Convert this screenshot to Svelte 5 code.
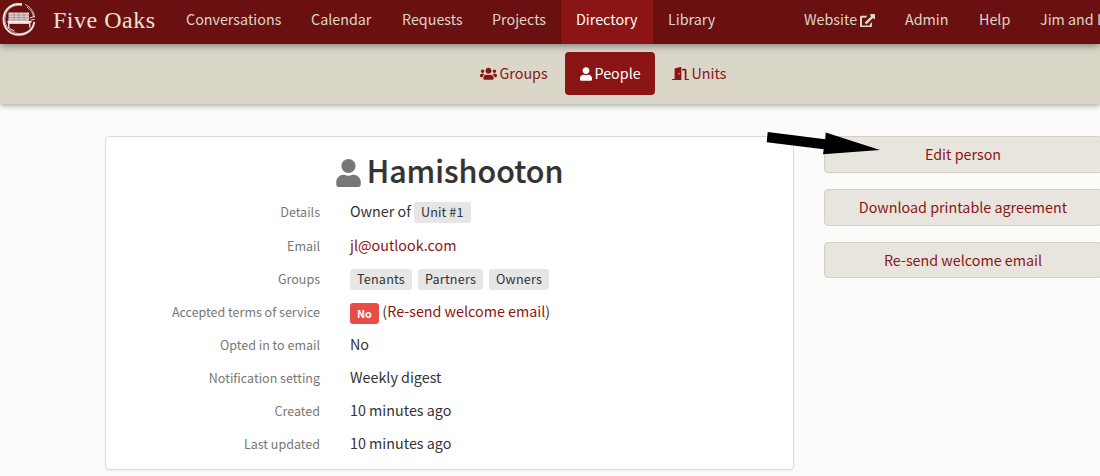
<script>
  const icons = {
    users: { box: '0 0 640 512', d: 'M96 224c35.3 0 64-28.7 64-64s-28.7-64-64-64-64 28.7-64 64 28.7 64 64 64zm448 0c35.3 0 64-28.7 64-64s-28.7-64-64-64-64 28.7-64 64 28.7 64 64 64zm32 32h-64c-17.6 0-33.5 7.1-45.1 18.6 40.3 22.1 68.9 62 75.1 109.4h66c17.7 0 32-14.3 32-32v-32c0-35.3-28.7-64-64-64zm-256 0c61.9 0 112-50.1 112-112S381.9 32 320 32 208 82.1 208 144s50.1 112 112 112zm76.8 32h-8.3c-20.8 10-43.9 16-68.5 16s-47.6-6-68.5-16h-8.3C179.6 288 128 339.6 128 403.2V432c0 26.5 21.5 48 48 48h288c26.5 0 48-21.5 48-48v-28.8c0-63.6-51.6-115.2-115.2-115.2zm-223.7-13.4C161.5 263.1 145.6 256 128 256H64c-35.3 0-64 28.7-64 64v32c0 17.7 14.3 32 32 32h65.9c6.3-47.4 34.9-87.3 75.2-109.4z' },
    user: { box: '0 0 448 512', d: 'M224 256c70.7 0 128-57.3 128-128S294.7 0 224 0 96 57.3 96 128s57.3 128 128 128zm89.6 32h-16.7c-22.2 10.2-46.9 16-72.9 16s-50.6-5.8-72.9-16h-16.7C60.2 288 0 348.2 0 422.4V464c0 26.5 21.5 48 48 48h352c26.5 0 48-21.5 48-48v-41.6c0-74.2-60.2-134.4-134.4-134.4z' },
    door: { box: '0 0 640 512', d: 'M624 448h-80V113.45C544 86.19 522.47 64 496 64H384v64h96v384h144c8.84 0 16-7.16 16-16v-32c0-8.84-7.16-16-16-16zM312.24 1.01l-192 49.74C105.99 54.44 96 67.7 96 82.92V448H16c-8.84 0-16 7.16-16 16v32c0 8.84 7.16 16 16 16h336V33.18c0-21.58-19.56-37.41-39.76-32.17zM264 288c-13.25 0-24-14.33-24-32s10.75-32 24-32 24 14.33 24 32-10.75 32-24 32z' },
    external: { box: '0 0 576 512', d: 'M456 300v164q0 48-48 48H48q-48 0-48-48V112q0-48 48-48h240l-72 76H76v296h304V376zM576 24v144c0 21-26 32-41 17l-36-36-253 253-70-70 253-253-36-36c-15-15-4-43 17-43h142c13 0 24 11 24 24z' }
  };
  const mainNav = [
    ['Conversations', 125], ['Calendar', 91], ['Requests', 90], ['Projects', 84],
    ['Directory', 92], ['Library', 77]
  ];
  const sideNav = [['Website', 101], ['Admin', 74], ['Help', 61], ['Jim and L', 110]];
  const actions = ['Edit person', 'Download printable agreement', 'Re-send welcome email'];
</script>

{#snippet icon(name, cls)}
  <svg class="icon {cls}" viewBox={icons[name].box} aria-hidden="true"><path d={icons[name].d} /></svg>
{/snippet}

<div class="page">
  <header>
    <svg class="logo" viewBox="0 0 34 34" aria-hidden="true">
      <g fill="none" stroke="#eee7e2">
        <path d="M20 1.300C10-.5 2 6 1.500 15.500C1.200 25 8 32 17 31.800C25 31.500 31 27 32.300 19" stroke-width="1.900" />
        <path d="M20 2.500C10 .8 3.800 7 3 15C2.500 23 8 29.500 16 30.600C22 31 27 28.500 30 24" stroke-width=".7" />
        <path d="M23 1.500C29 4 32 9 32.600 14.500M25 4C29 7 31 10 31.500 14" stroke-width=".8" />
        <path d="M27.500 15l5-1.500M28.500 17.200l4-.8M7.500 25.500l5 2.500" stroke-width="1" />
      </g>
      <path d="M6.500 9.500H27v9h1.500v6H27v-3.500H7.500v4.500H6v-8h.5z" fill="#dccfcb" />
      <path d="M7 12h20M7 14.500h20M7 17h20M12 9.500v8M17 9.500v8M22 9.500v8" stroke="#96605d" stroke-width=".5" />
      <path d="M5.500 18.800h24" stroke="#f5efeb" stroke-width="1.800" />
    </svg>
    <a class="brand">Five Oaks</a>
    <nav class="main">
      {#each mainNav as [label, w]}
        <a class:active={label === 'Directory'} style="width:{w}px">{label}</a>
      {/each}
    </nav>
    <nav class="side">
      {#each sideNav as [label, w]}
        <a style="width:{w}px">{label}{#if label === 'Website'}{@render icon('external', 'ext')}{/if}</a>
      {/each}
    </nav>
  </header>

  <nav class="sub">
    <a>{@render icon('users', 'wide')}<span>Groups</span></a>
    <a class="current">{@render icon('user', 'slim')}<span>People</span></a>
    <a>{@render icon('door', 'wide')}<span>Units</span></a>
  </nav>

  <main>
    <section class="card">
      <h1>{@render icon('user', 'big')}<span>Hamishooton</span></h1>
      <dl>
        <dt>Details</dt><dd>Owner of <span class="tag unit">Unit #1</span></dd>
        <dt>Email</dt><dd><a>jl@outlook.com</a></dd>
        <dt>Groups</dt><dd class="tags"><span class="tag">Tenants</span><span class="tag">Partners</span><span class="tag">Owners</span></dd>
        <dt>Accepted terms of service</dt><dd><span class="tag no">No</span>(<a>Re-send welcome email</a>)</dd>
        <dt>Opted in to email</dt><dd>No</dd>
        <dt>Notification setting</dt><dd>Weekly digest</dd>
        <dt>Created</dt><dd>10 minutes ago</dd>
        <dt>Last updated</dt><dd>10 minutes ago</dd>
      </dl>
    </section>
    <aside>
      {#each actions as action}<a class="button">{action}</a>{/each}
    </aside>
  </main>
  <svg class="pointer" viewBox="0 0 116 26" aria-hidden="true">
    <path d="M1.700 2L59.300 9.300L59.700 2.500L114 20L57 24.300L57.700 19.300L.7 12.300z" />
  </svg>
</div>

<style>
  :global(body) { margin: 0; overflow: hidden; }
  .page {
    position: relative; width: 1100px; height: 476px; overflow: hidden;
    background: #fbfbf9; color: #333;
    font: 14.320px/24px "Noto Sans CJK SC", "Open Sans", sans-serif;
  }
  .icon { fill: currentColor; flex: none; }
  header {
    position: relative; z-index: 2; display: flex; height: 44px; background: #6b1010;
    color: #dad7c9; box-shadow: 0 1px 8px rgba(0, 0, 0, .5);
  }
  .logo { width: 34px; height: 34px; margin: 3px 0 0 2px; flex: none; }
  .brand {
    width: 118px; margin-left: 17px; line-height: 40px; color: #e8e3d9; flex: none;
    font-family: "Liberation Serif", serif; font-size: 24px; letter-spacing: .5px; white-space: nowrap;
  }
  header nav { display: flex; flex: none; }
  header nav a { box-sizing: border-box; flex: none; padding-left: 15px; line-height: 37px; white-space: nowrap; }
  .side { margin-left: 59px; }
  .active { background: #8b1515; color: #fff; }
  .ext { width: 15px; height: 13.500px; margin-left: 3px; vertical-align: -2px; }
  .sub {
    position: relative; z-index: 1; display: flex; box-sizing: border-box; height: 60px; padding: 8px 0 0 465px;
    gap: 2px; background: #dad7c9; box-shadow: 0 1px 6px rgba(0, 0, 0, .4);
  }
  .sub a { display: flex; align-items: center; box-sizing: border-box; height: 43px; padding: 0 15px; color: #8b1515; border-radius: 4px; }
  .sub span { padding-bottom: 2px; }
  .sub a:first-child { width: 98px; }
  .sub .current { width: 90px; background: #8b1515; color: #fff; }
  .sub .wide { width: 17px; height: 13.600px; margin-right: 2.500px; }
  .sub .slim { width: 12px; height: 14px; margin-right: 2.500px; }
  main { display: flex; align-items: flex-start; gap: 30px; padding: 32px 0 0 105px; }
  .card {
    box-sizing: border-box; width: 689px; height: 334px; flex: none; border: 1px solid #ddd; border-radius: 4px;
    background: #fff; box-shadow: 0 1px 2px rgba(0, 0, 0, .05);
  }
  h1 {
    display: flex; align-items: center; justify-content: center; gap: 6px; height: 36px; margin: 17px 0 5px;
    font-size: 30.400px; font-weight: 500; line-height: 36px; -webkit-text-stroke: .2px #333;
  }
  h1 span { padding-bottom: 5px; }
  .big { width: 25px; height: 28px; color: #777; margin-top: 2px; }
  dl { display: grid; grid-template-columns: 214px 1fr; column-gap: 30px; grid-template-rows: 34px; grid-auto-rows: 33px; margin: 0; line-height: 33px; }
  dt { text-align: right; color: #777; font-size: 12.500px; }
  dd { display: flex; align-items: center; height: 33px; margin: -1px 0 0; white-space: pre; }
  dd a { color: #8b1515; }
  .tags { gap: 6px; }
  .tag { height: 21px; margin-top: 3px; padding: 0 7px; border-radius: 3px; background: #e6e6e6; font-size: 12.600px; line-height: 20px; letter-spacing: .2px; }
  .unit { letter-spacing: .1px; }
  .no { margin: 5px 3.500px 0 0; background: #e74c47; color: #fff; font-size: 10.800px; font-weight: 700; letter-spacing: 0; }
  aside { display: flex; flex-direction: column; gap: 16.200px; width: 278px; flex: none; }
  .button {
    box-sizing: border-box; height: 36.700px; border: 1px solid #d5cfbc; border-radius: 4px; background: #e8e5de;
    color: #8b1515; line-height: 33px; text-align: center;
  }
  .pointer { position: absolute; z-index: 3; left: 766px; top: 130px; width: 116px; height: 26px; }
</style>
